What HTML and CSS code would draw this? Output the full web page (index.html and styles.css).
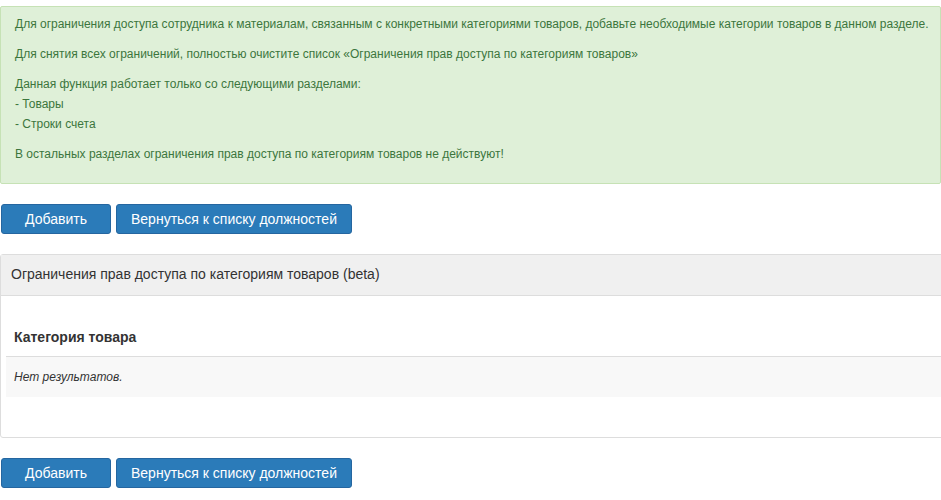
FILE: index.html
```html
<!DOCTYPE html>
<html lang="ru">
<head>
    <meta charset="UTF-8">
    <meta name="viewport" content="width=device-width, initial-scale=1.0">
    <title>Ограничения прав доступа</title>
    <link rel="stylesheet" href="styles.css">
</head>
<body>

<!-- Info message -->
<div class="alert-success">
    <p>Для ограничения доступа сотрудника к материалам, связанным с конкретными категориями товаров, добавьте необходимые категории товаров в данном разделе.</p>
    <p>Для снятия всех ограничений, полностью очистите список «Ограничения прав доступа по категориям товаров»</p>
    <p>Данная функция работает только со следующими разделами:<br>- Товары<br>- Строки счета</p>
    <p>В остальных разделах ограничения прав доступа по категориям товаров не действуют!</p>
</div>

<div class="actions">
    <a href="#" class="btn btn-add">Добавить</a>
    <a href="#" class="btn">Вернуться к списку должностей</a>
</div>

<!-- Category list -->
<div class="panel">
    <div class="panel-heading">Ограничения прав доступа по категориям товаров (beta)</div>
    <div class="panel-body">
        <table class="grid">
            <thead>
                <tr>
                    <th>Категория товара</th>
                </tr>
            </thead>
            <tbody>
                <tr>
                    <td class="empty">Нет результатов.</td>
                </tr>
            </tbody>
        </table>
    </div>
</div>

<div class="actions">
    <a href="#" class="btn btn-add">Добавить</a>
    <a href="#" class="btn">Вернуться к списку должностей</a>
</div>

</body>
</html>
```

FILE: styles.css
```css
html, body {
    overflow-x: hidden;
}
body {
    margin: 0;
    padding-top: 6px;
    font-family: "Liberation Sans", Arial, sans-serif;
    font-size: 13px;
    line-height: 20px;
    color: #333;
}

/* Green info box */
.alert-success {
    background-color: #dff0d8;
    border: 1px solid #c6e2b5;
    border-radius: 2px;
    color: #3c763d;
    font-size: 12px;
    padding: 7px 4px 9px 14px;
}
.alert-success p {
    margin: 0 0 10px;
}

/* Button rows */
.actions {
    display: flex;
    gap: 5px;
    padding: 20px 0 20px 1px;
}
.btn {
    display: inline-block;
    box-sizing: border-box;
    height: 30px;
    padding: 4px 14px;
    font-size: 14px;
    line-height: 20px;
    color: #fff;
    text-decoration: none;
    background-color: #2b7bb9;
    border: 1px solid #2566a0;
    border-radius: 3px;
}
.btn:hover {
    background-color: #286090;
}
.btn-add {
    min-width: 110px;
    text-align: center;
}

/* Panel with table */
.panel {
    margin-right: -20px;
    border: 1px solid #ddd;
    border-radius: 3px;
}
.panel-heading {
    background-color: #f0f0f0;
    border-bottom: 1px solid #ddd;
    padding: 9px 10px 11px;
    font-size: 14px;
}
.panel-body {
    padding: 23px 5px 40px;
}
.grid {
    width: 100%;
    border-collapse: collapse;
}
.grid th {
    text-align: left;
    font-size: 14px;
    padding: 8px 8px 9px;
    border-bottom: 1px solid #ddd;
}
.grid td {
    padding: 10px 8px;
    background-color: #f8f8f8;
}
.grid td.empty {
    font-style: italic;
    font-size: 12px;
}
```
